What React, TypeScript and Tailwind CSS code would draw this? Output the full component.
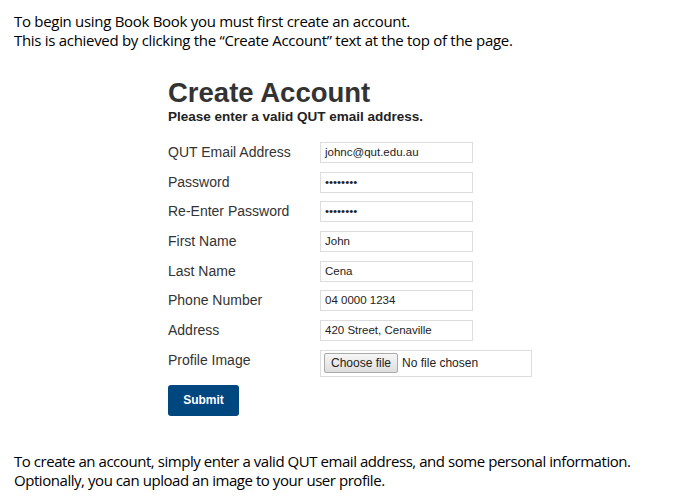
import React from "react";

const fields = [
  { label: "QUT Email Address", value: "johnc@qut.edu.au" },
  { label: "Password", value: "••••••••" },
  { label: "Re-Enter Password", value: "••••••••" },
  { label: "First Name", value: "John" },
  { label: "Last Name", value: "Cena" },
  { label: "Phone Number", value: "04 0000 1234" },
  { label: "Address", value: "420 Street, Cenaville" },
];

export default function App() {
  return (
    <div className="w-[700px] h-[500px] bg-white text-black overflow-hidden">
      <div className="pt-[12px] pl-[14px] text-[15px] leading-[19px] font-['Open_Sans',sans-serif] tracking-[-0.3px]">
        <p>To begin using Book Book you must first create an account.</p>
        <p>This is achieved by clicking the “Create Account” text at the top of the page.</p>
      </div>

      <div className="ml-[168px] mt-[29px] font-['Liberation_Sans',Arial,sans-serif] text-[#333]">
        <h1 className="text-[27.5px] font-bold leading-[28px]">Create Account</h1>
        <p className="text-[13.5px] font-bold leading-[16px] mt-[2px] text-[#222]">Please enter a valid QUT email address.</p>

        <div className="mt-[17px] flex flex-col gap-[8.7px]">
          {fields.map((f) => (
            <div key={f.label} className="flex items-center">
              <span className="w-[152px] text-[14px] leading-[21px]">{f.label}</span>
              <div className="w-[153px] h-[21px] border border-[#ddd] flex items-center pl-[4px] text-[11.5px] text-[#222]">
                {f.value}
              </div>
            </div>
          ))}
          <div className="flex items-start">
            <span className="w-[152px] text-[14px] leading-[21px]">Profile Image</span>
            <div className="w-[212px] h-[27px] border border-[#ddd] flex items-center pl-[3px] text-[12px] text-[#222]">
              <span className="h-[20px] px-[6px] flex items-center border border-[#aaa] rounded-[2px] bg-gradient-to-b from-[#f6f6f6] to-[#dedede]">
                Choose file
              </span>
              <span className="ml-[4px]">No file chosen</span>
            </div>
          </div>
        </div>

        <button className="mt-[8px] w-[71px] h-[31px] rounded-[3px] bg-[#00467f] text-white text-[12px] font-bold">
          Submit
        </button>
      </div>

      <div className="pl-[14px] mt-[36px] text-[15px] leading-[19px] font-['Open_Sans',sans-serif] tracking-[-0.45px]">
        <p>To create an account, simply enter a valid QUT email address, and some personal information.</p>
        <p>Optionally, you can upload an image to your user profile.</p>
      </div>
    </div>
  );
}
